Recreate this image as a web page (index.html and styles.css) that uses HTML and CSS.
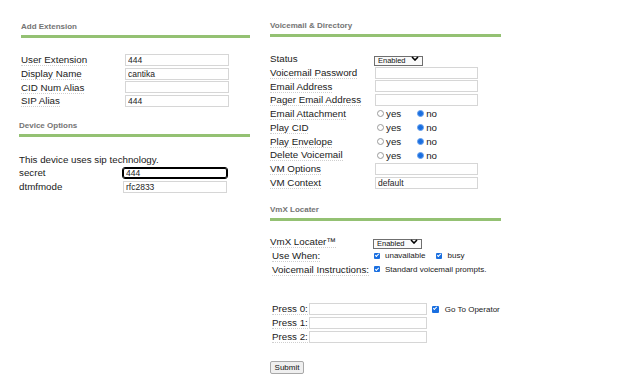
FILE: index.html
```html
<!DOCTYPE html>
<html>
<head>
<meta charset="utf-8">
<link rel="stylesheet" href="styles.css">
</head>
<body>
<div class="page">
  <div class="col col-left">
    <section class="sec sec-ext">
      <h2 class="hd">Add Extension</h2>
      <div class="form">
        <div class="lbl"><span class="tip">User Extension</span></div><input class="txt" value="444">
        <div class="lbl"><span class="tip">Display Name</span></div><input class="txt" value="cantika">
        <div class="lbl"><span class="tip">CID Num Alias</span></div><input class="txt" value="">
        <div class="lbl"><span class="tip">SIP Alias</span></div><input class="txt" value="444">
      </div>
    </section>
    <section class="sec sec-dev">
      <h2 class="hd">Device Options</h2>
      <p class="note">This device uses sip technology.</p>
      <div class="form">
        <div class="lbl">secret</div><input class="txt focus" value="444">
        <div class="lbl">dtmfmode</div><input class="txt" value="rfc2833">
      </div>
    </section>
  </div>

  <div class="col col-right">
    <section class="sec">
      <h2 class="hd">Voicemail &amp; Directory</h2>
      <div class="form form-r">
        <div class="lbl">Status</div>
        <div class="sel"><select><option>Enabled</option><option>Disabled</option></select><svg class="chev" width="8" height="5" viewBox="0 0 8 5"><polyline points="1,1 4,4 7,1" fill="none" stroke="#000" stroke-width="1.6"/></svg></div>
        <div class="lbl"><span class="tip">Voicemail Password</span></div><input class="txt txt-r" value="">
        <div class="lbl"><span class="tip">Email Address</span></div><input class="txt txt-r" value="">
        <div class="lbl"><span class="tip">Pager Email Address</span></div><input class="txt txt-r" value="">
        <div class="lbl"><span class="tip">Email Attachment</span></div>
        <div class="opts"><label class="opt opt-yes"><input type="radio" class="rd" name="attach">yes</label><label class="opt"><input type="radio" class="rd" name="attach" checked>no</label></div>
        <div class="lbl"><span class="tip">Play CID</span></div>
        <div class="opts"><label class="opt opt-yes"><input type="radio" class="rd" name="cid">yes</label><label class="opt"><input type="radio" class="rd" name="cid" checked>no</label></div>
        <div class="lbl"><span class="tip">Play Envelope</span></div>
        <div class="opts"><label class="opt opt-yes"><input type="radio" class="rd" name="env">yes</label><label class="opt"><input type="radio" class="rd" name="env" checked>no</label></div>
        <div class="lbl"><span class="tip">Delete Voicemail</span></div>
        <div class="opts"><label class="opt opt-yes"><input type="radio" class="rd" name="del">yes</label><label class="opt"><input type="radio" class="rd" name="del" checked>no</label></div>
        <div class="lbl"><span class="tip">VM Options</span></div><input class="txt txt-r" value="">
        <div class="lbl"><span class="tip">VM Context</span></div><input class="txt txt-r" value="default">
      </div>
    </section>

    <section class="sec sec-vmx">
      <h2 class="hd">VmX Locater</h2>
      <div class="form form-vmx">
        <div class="lbl"><span class="tip">VmX Locater™</span></div>
        <div class="sel"><select><option>Enabled</option><option>Disabled</option></select><svg class="chev" width="8" height="5" viewBox="0 0 8 5"><polyline points="1,1 4,4 7,1" fill="none" stroke="#000" stroke-width="1.6"/></svg></div>
        <div class="lbl ind"><span class="tip">Use When:</span></div>
        <div class="checks"><label class="chk chk-first"><input type="checkbox" class="cb" checked>unavailable</label><label class="chk"><input type="checkbox" class="cb" checked>busy</label></div>
        <div class="lbl ind"><span class="tip">Voicemail Instructions:</span></div>
        <div class="checks"><label class="chk"><input type="checkbox" class="cb" checked>Standard voicemail prompts.</label></div>
      </div>

      <div class="press">
        <div class="prow"><span class="tip">Press 0:</span><input class="txt txt-p" value=""><label class="chk chk-op"><input type="checkbox" class="cb" checked>Go To Operator</label></div>
        <div class="prow"><span class="tip">Press 1:</span><input class="txt txt-p" value=""></div>
        <div class="prow"><span class="tip">Press 2:</span><input class="txt txt-p" value=""></div>
      </div>

      <button class="btn" type="button">Submit</button>
    </section>
  </div>
</div>
</body>
</html>
```

FILE: styles.css
```css
html, body {
  margin: 0;
  padding: 0;
  background: #fff;
}
body {
  font-family: "Liberation Sans", Arial, sans-serif;
  font-size: 9.75px;
  color: #1a1a1a;
}
.page {
  display: flex;
  align-items: flex-start;
  padding-left: 19px;
}
.col-left {
  width: 231px;
  padding-top: 22px;
}
.col-right {
  width: 231px;
  margin-left: 20px;
  padding-top: 21px;
}
.sec-ext {
  padding-left: 2px;
}
.hd {
  margin: 0;
  font-size: 8px;
  line-height: 10px;
  font-weight: bold;
  color: #747474;
  padding-bottom: 3px;
  border-bottom: 3px solid #94c173;
}
.form {
  display: grid;
  grid-template-columns: 104px auto;
  grid-auto-rows: 13.75px;
  align-items: center;
  margin-top: 15px;
}
.lbl {
  line-height: 13.75px;
  white-space: nowrap;
}
.tip {
  border-bottom: 1px dotted #cfcfcf;
}
.sec-dev {
  margin-top: 13px;
}
.sec-dev .form {
  margin-top: 0;
}
.note {
  margin: 15.5px 0 0;
  height: 13.75px;
  line-height: 13.75px;
}
.txt {
  box-sizing: border-box;
  width: 104px;
  height: 12px;
  margin: 0;
  padding: 0 2px;
  border: 1px solid #d6d6d6;
  background: #fff;
  font-family: "Liberation Sans", Arial, sans-serif;
  font-size: 8.5px;
  color: #222;
}
.focus {
  height: 10px;
  border: 1px solid #000;
  outline: 1px solid #000;
  border-radius: 2px;
}
.form-r {
  grid-template-columns: 105px auto;
}
.txt-r {
  width: 103px;
}
.sel {
  position: relative;
  width: 49px;
  height: 10px;
  margin-left: -1px;
}
.sel select {
  appearance: none;
  -webkit-appearance: none;
  box-sizing: border-box;
  width: 49px;
  height: 10px;
  margin: 0;
  padding: 0 0 0 3px;
  border: 1px solid #6f6f6f;
  border-radius: 0;
  background: #fafafa;
  font-family: "Liberation Sans", Arial, sans-serif;
  font-size: 7.5px;
  line-height: 8px;
  color: #111;
}
.chev {
  position: absolute;
  right: 4px;
  top: 2.5px;
  pointer-events: none;
}
.opts {
  display: flex;
  align-items: center;
  padding-left: 2px;
}
.opt {
  display: flex;
  align-items: center;
  gap: 2px;
}
.opt-yes {
  margin-right: 16px;
}
.rd {
  appearance: none;
  -webkit-appearance: none;
  box-sizing: border-box;
  width: 7px;
  height: 7px;
  margin: 0;
  border: 1px solid #9a9a9a;
  border-radius: 50%;
  background: #fff;
}
.rd:checked {
  border-color: #6aa2ee;
  background: #1a6fe0;
}
.sec-vmx {
  margin-top: 15px;
}
.form-vmx {
  margin-top: 14.5px;
}
.ind {
  padding-left: 2px;
}
.checks {
  display: flex;
  align-items: center;
}
.chk {
  display: flex;
  align-items: center;
  gap: 5px;
  font-size: 8px;
}
.chk-first {
  margin-right: 11px;
}
.cb {
  appearance: none;
  -webkit-appearance: none;
  position: relative;
  box-sizing: border-box;
  width: 6px;
  height: 6px;
  margin: 0;
  border-radius: 1px;
  background: #1a6fe0;
}
.cb::after {
  content: "";
  position: absolute;
  left: 1.8px;
  top: 0.3px;
  width: 1.4px;
  height: 3px;
  border: solid #fff;
  border-width: 0 1px 1px 0;
  transform: rotate(45deg);
}
.press {
  margin-top: 25.75px;
}
.prow {
  display: flex;
  align-items: center;
  height: 14px;
  padding-left: 2px;
  white-space: nowrap;
}
.txt-p {
  width: 118px;
  height: 11.5px;
  margin-left: 1px;
}
.chk-op {
  margin-left: 5px;
  gap: 6px;
}
.chk-op .cb {
  width: 7px;
  height: 7px;
}
.btn {
  display: block;
  box-sizing: border-box;
  width: 34px;
  height: 13px;
  margin-top: 17px;
  padding: 0;
  border: 1px solid #a8a8a8;
  border-radius: 2px;
  background: #efefef;
  font-family: "Liberation Sans", Arial, sans-serif;
  font-size: 8px;
  color: #111;
}
```
